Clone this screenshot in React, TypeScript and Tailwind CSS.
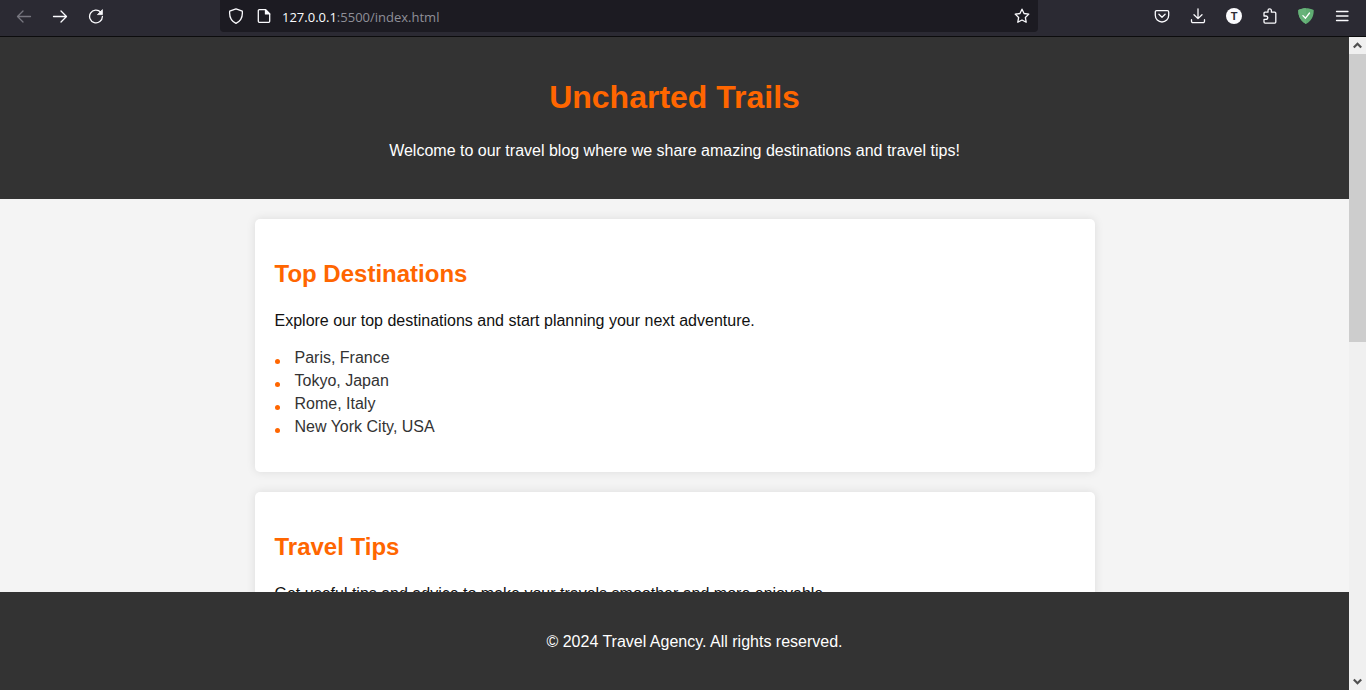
import type { ReactNode } from "react";

type IconProps = { children: ReactNode; className?: string };

function Icon({ children, className = "" }: IconProps) {
  return (
    <svg
      viewBox="0 0 16 16"
      className={`size-4 shrink-0 ${className}`}
      fill="none"
      stroke="currentColor"
      strokeWidth="1.3"
      strokeLinecap="round"
      strokeLinejoin="round"
      aria-hidden="true"
    >
      {children}
    </svg>
  );
}

function ToolButton({ label, disabled, children }: { label: string; disabled?: boolean; children: ReactNode }) {
  return (
    <button
      type="button"
      aria-label={label}
      disabled={disabled}
      className="flex h-8 w-9 items-center justify-center text-[#fbfbfe] disabled:text-[#77767f]"
    >
      {children}
    </button>
  );
}

function Toolbar() {
  return (
    <nav aria-label="Browser" className="flex h-[37px] shrink-0 items-start border-b border-[#0c0c0d] bg-[#2b2a33] px-1.5">
      <div className="flex w-[214px] shrink-0">
        <ToolButton label="Back" disabled>
          <Icon>
            <path d="M14.5 8.5H1.6M7 3 1.5 8.5 7 14" />
          </Icon>
        </ToolButton>
        <ToolButton label="Forward">
          <Icon>
            <path d="M1.500 8.500h12.900M9 3l5.500 5.500L9 14" />
          </Icon>
        </ToolButton>
        <ToolButton label="Reload">
          <Icon>
            <path d="M12.700 4.100A6.400 6.400 0 1 0 14.400 8.500" />
            <path d="M14.400 2v4.600H9.800z" fill="currentColor" strokeWidth="0.8" />
          </Icon>
        </ToolButton>
      </div>
      <div className="flex h-8 min-w-0 flex-1 items-center rounded-b bg-[#1c1b22] px-2 text-[#fbfbfe]">
        <Icon>
          <path d="M8 .9 14.300 3.200C14.800 8.400 12.800 13 8 15.400 3.200 13 1.200 8.400 1.700 3.200z" />
        </Icon>
        <Icon className="ml-3">
          <path d="M9.500 1.700H3.300a1 1 0 0 0-1 1v10.600a1 1 0 0 0 1 1h9.400a1 1 0 0 0 1-1V5.900z" />
          <path d="M9.500 1.700v4.200h4.200z" fill="currentColor" />
        </Icon>
        <a
          href="#top"
          className="ml-2.5 flex-1 truncate pt-0.5 font-['Open_Sans','Noto_Sans',sans-serif] text-[13px] leading-5 text-[#8f8f98]"
        >
          <span className="text-[#fbfbfe]">127.0.0.1</span>:5500/index.html
        </a>
        <button type="button" aria-label="Bookmark this page">
          <Icon>
            <path d="m8 1.200 2.050 4.300 4.750.65-3.450 3.300.85 4.750L8 11.950 3.800 14.200l.85-4.750L1.200 6.150l4.750-.65z" />
          </Icon>
        </button>
      </div>
      <div className="ml-[106px] flex shrink-0">
        <ToolButton label="Save to Pocket">
          <Icon>
            <path d="M2.600 2.600h10.800a1.300 1.300 0 0 1 1.300 1.300v3.400a6.700 6.700 0 0 1-13.400 0V3.900a1.300 1.300 0 0 1 1.300-1.300z" />
            <path d="M4.900 6.300 8 9.200l3.100-2.900" />
          </Icon>
        </ToolButton>
        <ToolButton label="Downloads">
          <Icon>
            <path d="M8 .8v9.600M4 6.700l4 3.900 4-3.900M1.500 11.700v1.600a1.300 1.300 0 0 0 1.300 1.300h10.400a1.300 1.300 0 0 0 1.300-1.300v-1.600" />
          </Icon>
        </ToolButton>
        <ToolButton label="Account">
          <span className="flex size-4 items-center justify-center rounded-full bg-[#fbfbfe] font-['Liberation_Sans',Arial,sans-serif] text-[11px] leading-4 font-bold text-[#2b2a33]">
            T
          </span>
        </ToolButton>
        <ToolButton label="Extensions">
          <Icon>
            <path d="M2 7.200V5.200a1 1 0 0 1 1-1h3V2.500a1.700 1.700 0 0 1 3.400 0v1.700h3.300a1.100 1.100 0 0 1 1.100 1.100v8.700a1.100 1.100 0 0 1-1.100 1.100H3.100A1.100 1.100 0 0 1 2 14v-2.600h2a1.700 1.700 0 0 0 1.700-2.100A1.800 1.800 0 0 0 4 8H2z" />
          </Icon>
        </ToolButton>
        <ToolButton label="Ad blocker">
          <Icon>
            <path d="M8 .2C5.500.2 2.600.8.300 2 .3 4.600 0 11.200 8 16 16 11.200 15.700 4.600 15.700 2 13.400.8 10.500.2 8 .2z" fill="#5fad72" stroke="none" />
            <path d="M8 .2C5.500.2 2.600.8.300 2 .3 4.600 0 11.200 8 16z" fill="#67b279" stroke="none" />
            <path d="m4.900 7.600 2.600 2.600 4-5.200" stroke="#fff" />
          </Icon>
        </ToolButton>
        <ToolButton label="Open menu">
          <Icon>
            <path d="M2.500 3.500h11.500M2.500 8h11.500M2.500 12.500h11.500" />
          </Icon>
        </ToolButton>
      </div>
    </nav>
  );
}

function Scrollbar() {
  return (
    <div aria-hidden="true" className="flex w-[17px] shrink-0 flex-col bg-[#f0f0f0] text-[#505050]">
      <span className="flex h-[17px] items-center justify-center">
        <svg viewBox="0 0 9 7" className="h-[7px] w-[9px]" fill="none" stroke="currentColor" strokeWidth="2.200">
          <path d="M.8 5.500 4.500 1.800l3.700 3.700" />
        </svg>
      </span>
      <div className="flex flex-1 flex-col">
        <div className="h-[46.5%] bg-[#cdcdcd]" />
      </div>
      <span className="flex h-[17px] items-center justify-center">
        <svg viewBox="0 0 9 7" className="h-[7px] w-[9px]" fill="none" stroke="currentColor" strokeWidth="2.200">
          <path d="M.8 1.500l3.700 3.700 3.700-3.700" />
        </svg>
      </span>
    </div>
  );
}

function Card({ title, intro, items = [] }: { title: string; intro: string; items?: string[] }) {
  return (
    <section className="w-full max-w-[840px] shrink-0 rounded-[5px] bg-white px-5 pt-10 pb-9 shadow-[0_0_10px_rgba(0,0,0,0.1)]">
      <h2 className="text-2xl leading-[30px] font-bold text-[#ff6600]">{title}</h2>
      <p className="mt-[23px] leading-[18px] text-[#111111]">{intro}</p>
      {items.length > 0 && (
        <ul className="mt-[19px] flex flex-col gap-[5px]">
          {items.map((item) => (
            <li key={item} className="flex items-center leading-[18px] text-[#333333]">
              <span className="mt-1.5 mr-[15px] size-[5px] rounded-full bg-[#ff6600]" />
              {item}
            </li>
          ))}
        </ul>
      )}
    </section>
  );
}

export default function App() {
  return (
    <div className="flex h-screen flex-col overflow-hidden">
      <Toolbar />
      <div className="flex min-h-0 flex-1">
        <div
          id="top"
          className="flex min-w-0 flex-1 flex-col overflow-hidden bg-[#f4f4f4] font-['Liberation_Sans',Arial,sans-serif] text-base"
        >
          <header className="shrink-0 bg-[#333333] px-5 pt-10 pb-9 text-center">
            <h1 className="text-[32px] leading-10 font-bold text-[#ff6600]">Uncharted Trails</h1>
            <p className="mt-[22px] leading-6 text-white">
              Welcome to our travel blog where we share amazing destinations and travel tips!
            </p>
          </header>
          <main className="flex min-h-0 flex-1 flex-col items-center gap-5 overflow-hidden px-5 pt-5">
            <Card
              title="Top Destinations"
              intro="Explore our top destinations and start planning your next adventure."
              items={["Paris, France", "Tokyo, Japan", "Rome, Italy", "New York City, USA"]}
            />
            <Card title="Travel Tips" intro="Get useful tips and advice to make your travels smoother and more enjoyable." />
          </main>
          <footer className="shrink-0 bg-[#333333] pt-[41px] pb-[39px] pl-10 text-center leading-[18px] text-white">
            <p>© 2024 Travel Agency. All rights reserved.</p>
          </footer>
        </div>
        <Scrollbar />
      </div>
    </div>
  );
}
